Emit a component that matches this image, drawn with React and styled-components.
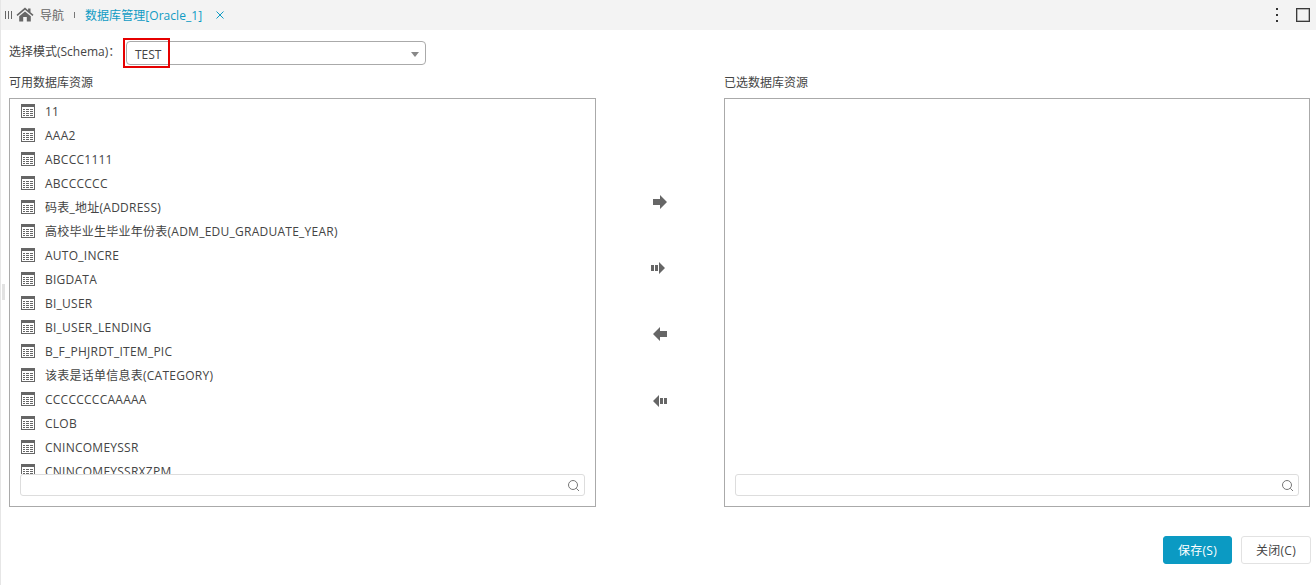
import styled, { createGlobalStyle } from 'styled-components'

const GlobalStyle = createGlobalStyle`
  html, body {
    margin: 0;
    padding: 0;
    background: #fff;
  }
  body {
    font-family: "Open Sans", "Noto Sans CJK SC", sans-serif;
    font-size: 12px;
    color: #444;
  }
`

const tables = [
  '11',
  'AAA2',
  'ABCCC1111',
  'ABCCCCCC',
  '码表_地址(ADDRESS)',
  '高校毕业生毕业年份表(ADM_EDU_GRADUATE_YEAR)',
  'AUTO_INCRE',
  'BIGDATA',
  'BI_USER',
  'BI_USER_LENDING',
  'B_F_PHJRDT_ITEM_PIC',
  '该表是话单信息表(CATEGORY)',
  'CCCCCCCCAAAAA',
  'CLOB',
  'CNINCOMEYSSR',
  'CNINCOMEYSSRXZPM',
]

const Page = styled.div`
  position: relative;
  width: 1316px;
  height: 585px;
  overflow: hidden;
  border-left: 1px solid #e6e6e6;
  box-sizing: border-box;
`

const TabBar = styled.div`
  display: flex;
  align-items: center;
  height: 30px;
  padding: 0 0 1px 4px;
  box-sizing: border-box;
  background: #f3f3f3;
`

const Grip = styled.span`
  width: 7px;
  height: 8px;
  margin-right: 4px;
  background: repeating-linear-gradient(90deg, #666 0 1px, transparent 1px 3px);
`

const NavTab = styled.span`
  margin-left: 6px;
  color: #666;
  font-size: 12px;
`

const TabDivider = styled.span`
  width: 1px;
  height: 6px;
  margin: 0 10px 0 10px;
  background: #777;
`

const ActiveTab = styled.span`
  color: #0f9bc4;
  font-size: 12px;
  letter-spacing: 0.05px;
`

const TabClose = styled.svg`
  width: 8px;
  height: 8px;
  margin-left: 14px;
  margin-top: 1px;
`

const TabTools = styled.div`
  display: flex;
  align-items: center;
  margin-left: auto;
  padding-right: 6px;
  gap: 18px;
`

const Dots = styled.span`
  display: flex;
  flex-direction: column;
  gap: 4px;
  i {
    display: block;
    width: 2px;
    height: 2px;
    background: #333;
  }
`

const MaxBox = styled.span`
  width: 12px;
  height: 12px;
  border: 1px solid #3a3a3a;
  box-shadow: inset 0 0 0 0.5px #777;
`

const Content = styled.div`
  padding: 11px 5px 0 8px;
`

const SchemaRow = styled.div`
  display: flex;
  align-items: center;
  height: 23px;
`

const SchemaLabel = styled.label`
  width: 117px;
  flex: none;
  margin-top: -3px;
  color: #444;
`

const SchemaSelect = styled.div`
  position: relative;
  display: flex;
  align-items: center;
  box-sizing: border-box;
  width: 300px;
  height: 24px;
  padding: 3px 0 0 8px;
  border: 1px solid #aaa;
  border-radius: 4px;
  color: #444;
`

const Caret = styled.span`
  position: absolute;
  right: 6px;
  top: 10px;
  width: 0;
  height: 0;
  border-left: 4px solid transparent;
  border-right: 4px solid transparent;
  border-top: 5px solid #888;
`

const Callout = styled.span`
  position: absolute;
  left: -4px;
  top: -4px;
  width: 43px;
  height: 26px;
  border: 2px solid #e60000;
`

const Columns = styled.div`
  display: grid;
  grid-template-columns: 587px 128px 586px;
  margin-top: 10px;
`

const Column = styled.section`
  display: flex;
  flex-direction: column;
`

const ColumnTitle = styled.div`
  height: 24px;
  line-height: 18px;
  color: #444;
`

const Panel = styled.div`
  display: flex;
  flex-direction: column;
  box-sizing: border-box;
  height: 409px;
  border: 1px solid #aaa;
`

const List = styled.ul`
  flex: 1;
  min-height: 0;
  margin: 0;
  padding: 0;
  overflow: hidden;
  list-style: none;
`

const Row = styled.li`
  display: flex;
  align-items: center;
  height: 24px;
  padding-left: 11px;
  color: #444;
  letter-spacing: 0.25px;
  white-space: nowrap;
`

const RowIcon = styled.svg`
  flex: none;
  width: 14px;
  height: 14px;
  margin-right: 10px;
`

const SearchBox = styled.div`
  display: flex;
  align-items: center;
  justify-content: flex-end;
  box-sizing: border-box;
  height: 22px;
  margin: 0 10px 10px;
  padding-right: 4px;
  border: 1px solid #ddd;
  border-radius: 3px;
  background: #fff;
`

const SearchIcon = styled.svg`
  width: 13px;
  height: 13px;
`

const Transfer = styled.div`
  display: flex;
  flex-direction: column;
  align-items: center;
  padding-top: 121px;
`

const TransferButton = styled.svg`
  display: block;
  flex: none;
  width: 18px;
  height: 14px;
  margin-bottom: ${(p) => p.$gap}px;
  color: #666;
`

const Footer = styled.div`
  display: flex;
  justify-content: flex-end;
  gap: 9px;
  margin-top: 29px;
`

const Button = styled.button`
  box-sizing: border-box;
  width: ${(p) => (p.$primary ? '69px' : '70px')};
  height: 28px;
  padding: 0;
  border: 1px solid ${(p) => (p.$primary ? '#0b9ac3' : '#e2e2e2')};
  border-radius: 3px;
  background: ${(p) => (p.$primary ? '#0b9ac3' : '#fff')};
  color: ${(p) => (p.$primary ? '#fff' : '#444')};
  font: inherit;
  letter-spacing: 0.3px;
`

const ResizeHandle = styled.span`
  position: absolute;
  left: 1px;
  top: 284px;
  width: 3px;
  height: 16px;
  background: #e2e2e2;
`

function TableIcon() {
  return (
    <RowIcon viewBox="0 0 14 14">
      <rect x="0.5" y="0.5" width="13" height="13" fill="#fff" stroke="#666" />
      <rect x="0" y="0" width="14" height="3" fill="#666" />
      <path
        d="M2 5h2v1H2zM5 5h3v1H5zM9 5h3v1H9zM2 7h2v1H2zM5 7h3v1H5zM9 7h3v1H9zM2 9h2v1H2zM5 9h3v1H5zM9 9h3v1H9zM2 11h2v1H2zM5 11h3v1H5zM9 11h3v1H9z"
        fill="#666"
      />
    </RowIcon>
  )
}

function Search() {
  return (
    <SearchIcon viewBox="0 0 13 13">
      <circle cx="6" cy="6" r="4.5" fill="none" stroke="#777" />
      <path d="M9.3 9.3L12 12" stroke="#777" />
    </SearchIcon>
  )
}

function ResourcePanel({ title, items }) {
  return (
    <Column>
      <ColumnTitle>{title}</ColumnTitle>
      <Panel>
        <List>
          {items.map((name) => (
            <Row key={name}>
              <TableIcon />
              {name}
            </Row>
          ))}
        </List>
        <SearchBox>
          <Search />
        </SearchBox>
      </Panel>
    </Column>
  )
}

export default function App() {
  return (
    <Page>
      <GlobalStyle />
      <TabBar>
        <Grip />
        <svg width="18" height="15" viewBox="0 0 18 15">
          <path
            d="M9 0.5L0.5 7.8l1 1.2L9 2.8 16.5 9l1-1.2L14.5 5.2V1.5h-2.4v1.7zM3.2 9.3V14.5h4V10h3.6v4.5h4V9.3L9 4.5z"
            fill="#666"
          />
        </svg>
        <NavTab>导航</NavTab>
        <TabDivider />
        <ActiveTab>数据库管理[Oracle_1]</ActiveTab>
        <TabClose viewBox="0 0 8 8">
          <path d="M0.5 0.5l7 7M7.5 0.5l-7 7" stroke="#0f9bc4" fill="none" />
        </TabClose>
        <TabTools>
          <Dots>
            <i />
            <i />
            <i />
          </Dots>
          <MaxBox />
        </TabTools>
      </TabBar>
      <Content>
        <SchemaRow>
          <SchemaLabel>选择模式(Schema)：</SchemaLabel>
          <SchemaSelect>
            TEST
            <Caret />
            <Callout />
          </SchemaSelect>
        </SchemaRow>
        <Columns>
          <ResourcePanel title="可用数据库资源" items={tables} />
          <Transfer>
            <TransferButton viewBox="0 0 18 14" $gap={52}>
              <path d="M2 4h7V0l7 7-7 7v-4H2z" fill="currentColor" />
            </TransferButton>
            <TransferButton viewBox="0 0 18 14" $gap={52}>
              <path d="M0 4h3v6H0zM4 4h3v6H4zM8 1l6 6-6 6z" fill="currentColor" />
            </TransferButton>
            <TransferButton viewBox="0 0 18 14" $gap={53}>
              <path d="M16 4H9V0L2 7l7 7v-4h7z" fill="currentColor" />
            </TransferButton>
            <TransferButton viewBox="0 0 18 14" $gap={0}>
              <path d="M8 1L2 7l6 6zM9 4h3v6H9zM13 4h3v6h-3z" fill="currentColor" />
            </TransferButton>
          </Transfer>
          <ResourcePanel title="已选数据库资源" items={[]} />
        </Columns>
        <Footer>
          <Button $primary>保存(S)</Button>
          <Button>关闭(C)</Button>
        </Footer>
      </Content>
      <ResizeHandle />
    </Page>
  )
}
